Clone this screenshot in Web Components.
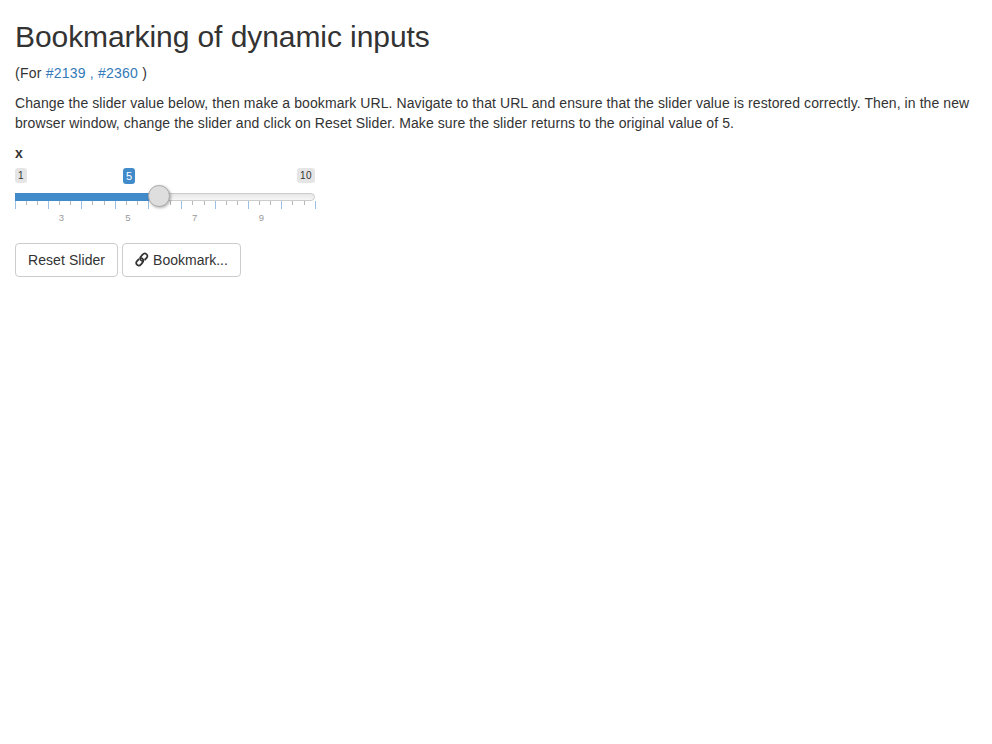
<!DOCTYPE html>
<html lang="en"><head><meta charset="utf-8"><title>Bookmarking of dynamic inputs</title>
<style>
body{margin:0;background:#fff;color:#333;font:14px/20px "Liberation Sans",Arial,sans-serif}
</style></head>
<body>
<bookmark-page>
  <span slot="title">Bookmarking of dynamic inputs</span>
  <range-slider></range-slider>
  <action-button slot="actions" style="letter-spacing:.07px">Reset Slider</action-button>
  <action-button slot="actions"><link-icon slot="icon"></link-icon>Bookmark...</action-button>
</bookmark-page>
<script>
class LinkIcon extends HTMLElement{
  constructor(){super();this.attachShadow({mode:'open'}).innerHTML=`
<style>:host{display:block;width:14px;height:16px;margin-right:4px}svg{display:block}</style>
<svg width="14" height="16" viewBox="0 0 14 16" fill="none" stroke="#333" stroke-width="1.8">
<path d="M8.3 9.2C6.8 9.2 5.2 8 5.1 6.5C5 5.3 6.4 3.9 7.6 2.6C8.8 1.3 10.2 1.1 11.4 2.1C12.8 3.2 12.7 4.7 11.6 6L9.6 8"/>
<path d="M5.3 5.8C6.8 5.8 8.4 7 8.5 8.5C8.6 9.7 7.2 11.1 6 12.4C4.8 13.7 3.4 13.9 2.2 12.9C.8 11.8 .9 10.3 2 9L4 7"/>
</svg>`}
}
customElements.define('link-icon',LinkIcon);

class ActionButton extends HTMLElement{
  constructor(){super();this.attachShadow({mode:'open'}).innerHTML=`
<style>:host{display:block}
button{display:flex;align-items:center;box-sizing:border-box;height:34px;padding:6px 12px;margin:0;border:1px solid #ccc;border-radius:4px;background:#fff;color:#333;font:inherit;letter-spacing:inherit;line-height:20px;white-space:nowrap}
</style><button><slot name="icon"></slot><span><slot></slot></span></button>`}
}
customElements.define('action-button',ActionButton);

class RangeSlider extends HTMLElement{
  constructor(){super();
    const ticks=Array.from({length:28},(_,i)=>`<i class="${i%3?'':'major'}" style="left:${Math.floor(i*100/9+.12)}px"></i>`).join('');
    this.attachShadow({mode:'open'}).innerHTML=`
<style>:host{display:block;width:300px;color:#333}
label{display:block;font-weight:700;line-height:20px;margin-bottom:5px}
.values{position:relative;display:flex;justify-content:space-between;height:25px;font-size:10px;line-height:13px}
.values span{box-sizing:border-box;height:15px;padding:1px 3px;border-radius:3px;background:rgba(0,0,0,.1)}
.values .max{letter-spacing:.4px}
.values .current{position:absolute;left:108px;top:0;height:16px;font-size:11px;padding:1px 3px;line-height:14px;background:#428bca;color:#fff}
.track{position:relative;height:8px;box-sizing:border-box;border:1px solid #ccc;border-radius:8px;background:linear-gradient(#dedede -50%,#fff 150%)}
.bar{position:absolute;left:-1px;top:-1px;width:145px;height:8px;background:#428bca}
.handle{position:absolute;z-index:1;left:132px;top:-9px;width:22px;height:22px;box-sizing:border-box;border:1px solid #ababab;border-radius:50%;background:#dedede;box-shadow:1px 1px 3px rgba(0,0,0,.3)}
.ticks{position:relative;height:8px}
.ticks i{position:absolute;top:0;width:1px;height:4px;background:#b8b8b8}
.ticks .major{height:8px;background:#9cc1e0}
.labels{display:grid;grid-template-columns:repeat(4,66.67px);margin-left:13px;font-size:9.5px;line-height:10px;text-align:center;color:#999;height:14px;padding-top:4px;box-sizing:border-box}
</style>
<label>x</label>
<div class="values"><span>1</span><span class="current">5</span><span class="max">10</span></div>
<div class="track"><div class="bar"></div><div class="handle"></div></div>
<div class="ticks">${ticks}</div>
<div class="labels"><span>3</span><span>5</span><span>7</span><span>9</span></div>`}
}
customElements.define('range-slider',RangeSlider);

class BookmarkPage extends HTMLElement{
  constructor(){super();this.attachShadow({mode:'open'}).innerHTML=`
<style>:host{display:block;padding:20px 15px}
h1{font-size:30px;line-height:33px;font-weight:400;letter-spacing:-.075px;margin:0 0 10px}
p{margin:0 0 10px;letter-spacing:.086px}
.refs{letter-spacing:.22px}
a{color:#337ab7;text-decoration:none}
.actions{display:flex;gap:4px;margin-top:20px}
</style>
<h1><slot name="title"></slot></h1>
<p class="refs">(For <a href="#2139">#2139 ,</a> <a href="#2360">#2360</a> )</p>
<p>Change the slider value below, then make a bookmark URL. Navigate to that URL and ensure that the slider value is restored correctly. Then, in the new browser window, change the slider and click on Reset Slider. Make sure the slider returns to the original value of 5.</p>
<slot></slot>
<div class="actions"><slot name="actions"></slot></div>`}
}
customElements.define('bookmark-page',BookmarkPage);
</script>
</body></html>
